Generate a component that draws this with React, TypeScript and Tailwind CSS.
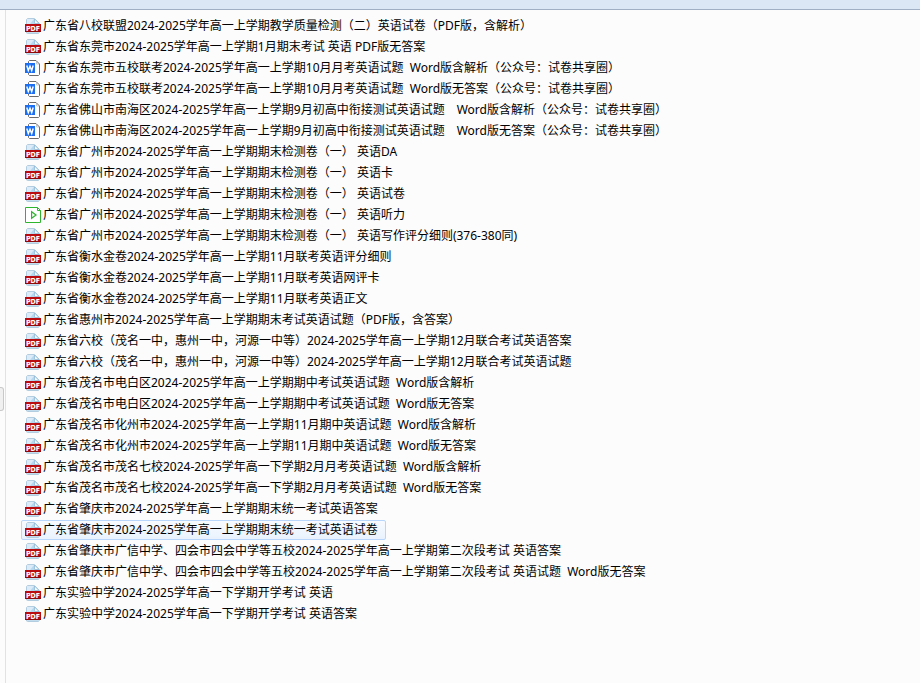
type Kind = 'pdf' | 'word' | 'audio'

interface FileEntry {
  name: string
  kind: Kind
  selected?: boolean
}

const files: FileEntry[] = [
  { kind: 'pdf', name: '广东省八校联盟2024-2025学年高一上学期教学质量检测（二）英语试卷（PDF版，含解析）' },
  { kind: 'pdf', name: '广东省东莞市2024-2025学年高一上学期1月期末考试 英语 PDF版无答案' },
  { kind: 'word', name: '广东省东莞市五校联考2024-2025学年高一上学期10月月考英语试题  Word版含解析（公众号：试卷共享圈）' },
  { kind: 'word', name: '广东省东莞市五校联考2024-2025学年高一上学期10月月考英语试题  Word版无答案（公众号：试卷共享圈）' },
  { kind: 'word', name: '广东省佛山市南海区2024-2025学年高一上学期9月初高中衔接测试英语试题　Word版含解析（公众号：试卷共享圈）' },
  { kind: 'word', name: '广东省佛山市南海区2024-2025学年高一上学期9月初高中衔接测试英语试题　Word版无答案（公众号：试卷共享圈）' },
  { kind: 'pdf', name: '广东省广州市2024-2025学年高一上学期期末检测卷（一） 英语DA' },
  { kind: 'pdf', name: '广东省广州市2024-2025学年高一上学期期末检测卷（一） 英语卡' },
  { kind: 'pdf', name: '广东省广州市2024-2025学年高一上学期期末检测卷（一） 英语试卷' },
  { kind: 'audio', name: '广东省广州市2024-2025学年高一上学期期末检测卷（一） 英语听力' },
  { kind: 'pdf', name: '广东省广州市2024-2025学年高一上学期期末检测卷（一） 英语写作评分细则(376-380同)' },
  { kind: 'pdf', name: '广东省衡水金卷2024-2025学年高一上学期11月联考英语评分细则' },
  { kind: 'pdf', name: '广东省衡水金卷2024-2025学年高一上学期11月联考英语网评卡' },
  { kind: 'pdf', name: '广东省衡水金卷2024-2025学年高一上学期11月联考英语正文' },
  { kind: 'pdf', name: '广东省惠州市2024-2025学年高一上学期期末考试英语试题（PDF版，含答案）' },
  { kind: 'pdf', name: '广东省六校（茂名一中，惠州一中，河源一中等）2024-2025学年高一上学期12月联合考试英语答案' },
  { kind: 'pdf', name: '广东省六校（茂名一中，惠州一中，河源一中等）2024-2025学年高一上学期12月联合考试英语试题' },
  { kind: 'pdf', name: '广东省茂名市电白区2024-2025学年高一上学期期中考试英语试题  Word版含解析' },
  { kind: 'pdf', name: '广东省茂名市电白区2024-2025学年高一上学期期中考试英语试题  Word版无答案' },
  { kind: 'pdf', name: '广东省茂名市化州市2024-2025学年高一上学期11月期中英语试题  Word版含解析' },
  { kind: 'pdf', name: '广东省茂名市化州市2024-2025学年高一上学期11月期中英语试题  Word版无答案' },
  { kind: 'pdf', name: '广东省茂名市茂名七校2024-2025学年高一下学期2月月考英语试题  Word版含解析' },
  { kind: 'pdf', name: '广东省茂名市茂名七校2024-2025学年高一下学期2月月考英语试题  Word版无答案' },
  { kind: 'pdf', name: '广东省肇庆市2024-2025学年高一上学期期末统一考试英语答案' },
  { kind: 'pdf', name: '广东省肇庆市2024-2025学年高一上学期期末统一考试英语试卷', selected: true },
  { kind: 'pdf', name: '广东省肇庆市广信中学、四会市四会中学等五校2024-2025学年高一上学期第二次段考试 英语答案' },
  { kind: 'pdf', name: '广东省肇庆市广信中学、四会市四会中学等五校2024-2025学年高一上学期第二次段考试 英语试题  Word版无答案' },
  { kind: 'pdf', name: '广东实验中学2024-2025学年高一下学期开学考试 英语' },
  { kind: 'pdf', name: '广东实验中学2024-2025学年高一下学期开学考试 英语答案' },
]

function PdfIcon() {
  return (
    <svg width="16" height="16" viewBox="0 0 16 16" className="shrink-0" aria-hidden="true">
      <path d="M1.5 15V1.5l1-1h7l5 5V14l-1 1.5H2.5z" fill="#dcebf7" stroke="#b3cde0" />
      <path d="M2 14.5h12" stroke="#c3dcee" />
      <path d="M5 6 9 1v5z" fill="#b5d8f0" />
      <path d="M9.5 1v4.5h4.5z" fill="#f4fafe" stroke="#8db7d6" strokeWidth=".8" />
      <rect y="6" width="16" height="8" fill="#b90c10" />
      <path d="M0 13.5h16" stroke="#8f080a" />
      <text x="8" y="13" textAnchor="middle" fill="#fff" fontSize="7" fontWeight="700" fontFamily="DejaVu Sans Condensed, DejaVu Sans, sans-serif">
        PDF
      </text>
    </svg>
  )
}

function WordIcon() {
  return (
    <svg width="16" height="16" viewBox="0 0 16 16" className="shrink-0" aria-hidden="true">
      <path d="M3.5 3V1.5l1-1H11l3.5 3.5v10.5l-1 1h-9l-1-1V13" fill="#fff" stroke="#6b6b6b" />
      <path d="M11.5 1v3h3" fill="none" stroke="#a8a8a8" strokeWidth=".6" />
      <rect y="3" width="10" height="10" fill="#1d6ff2" />
      <path d="M1.8 5.5 3.3 10.5 5 6.2 6.7 10.5 8.2 5.5" fill="none" stroke="#fff" strokeWidth="1.4" />
    </svg>
  )
}

function AudioIcon() {
  return (
    <svg width="16" height="16" viewBox="0 0 16 16" className="shrink-0" aria-hidden="true">
      <path d="M.5.5h12l3 3v12H.5z" fill="#fff" stroke="#2db52d" />
      <path d="M12.5.5v3h3" fill="none" stroke="#2db52d" />
      <path d="M6.6 4.8v6.4L11 8z" fill="none" stroke="#2db52d" strokeWidth="1.2" />
    </svg>
  )
}

const icons = { pdf: PdfIcon, word: WordIcon, audio: AudioIcon }

function FileRow({ name, kind, selected }: FileEntry) {
  const Icon = icons[kind]
  return (
    <li
      className={
        selected
          ? 'flex w-fit h-5 items-center gap-[2px] rounded-[2px] border border-[#b8d6fb] bg-linear-to-b from-[#f8fbff] to-[#e9f2fd] pl-[3px] pr-[7px]'
          : 'flex w-fit h-5 items-center gap-[2px] rounded-[2px] border border-transparent pl-[3px] pr-[7px]'
      }
    >
      <Icon />
      <span className="whitespace-pre">{name}</span>
    </li>
  )
}

export default function App() {
  return (
    <div className={`flex min-h-screen flex-col bg-[#fcfcfc] text-xs leading-4 text-black font-['Noto_Sans','Noto_Sans_CJK_SC',sans-serif] [text-spacing-trim:space-all]`}>
      <header className="h-[10px] border-b border-[#a0afc3] bg-[#dce7f5]" />
      <div className="flex grow">
        <div className="flex w-[6px] shrink-0 items-start border-r border-[#d6e5f5]">
          <button
            aria-label="调整窗格"
            className="mt-[377px] h-6 w-1 rounded-r-[3px] border border-l-0 border-[#c8c8c8] bg-[#f0f0f0]"
          />
        </div>
        <ul className="flex min-w-0 flex-col gap-px pt-[6px] pl-[15px]">
          {files.map(file => (
            <FileRow key={file.name} {...file} />
          ))}
        </ul>
      </div>
    </div>
  )
}
